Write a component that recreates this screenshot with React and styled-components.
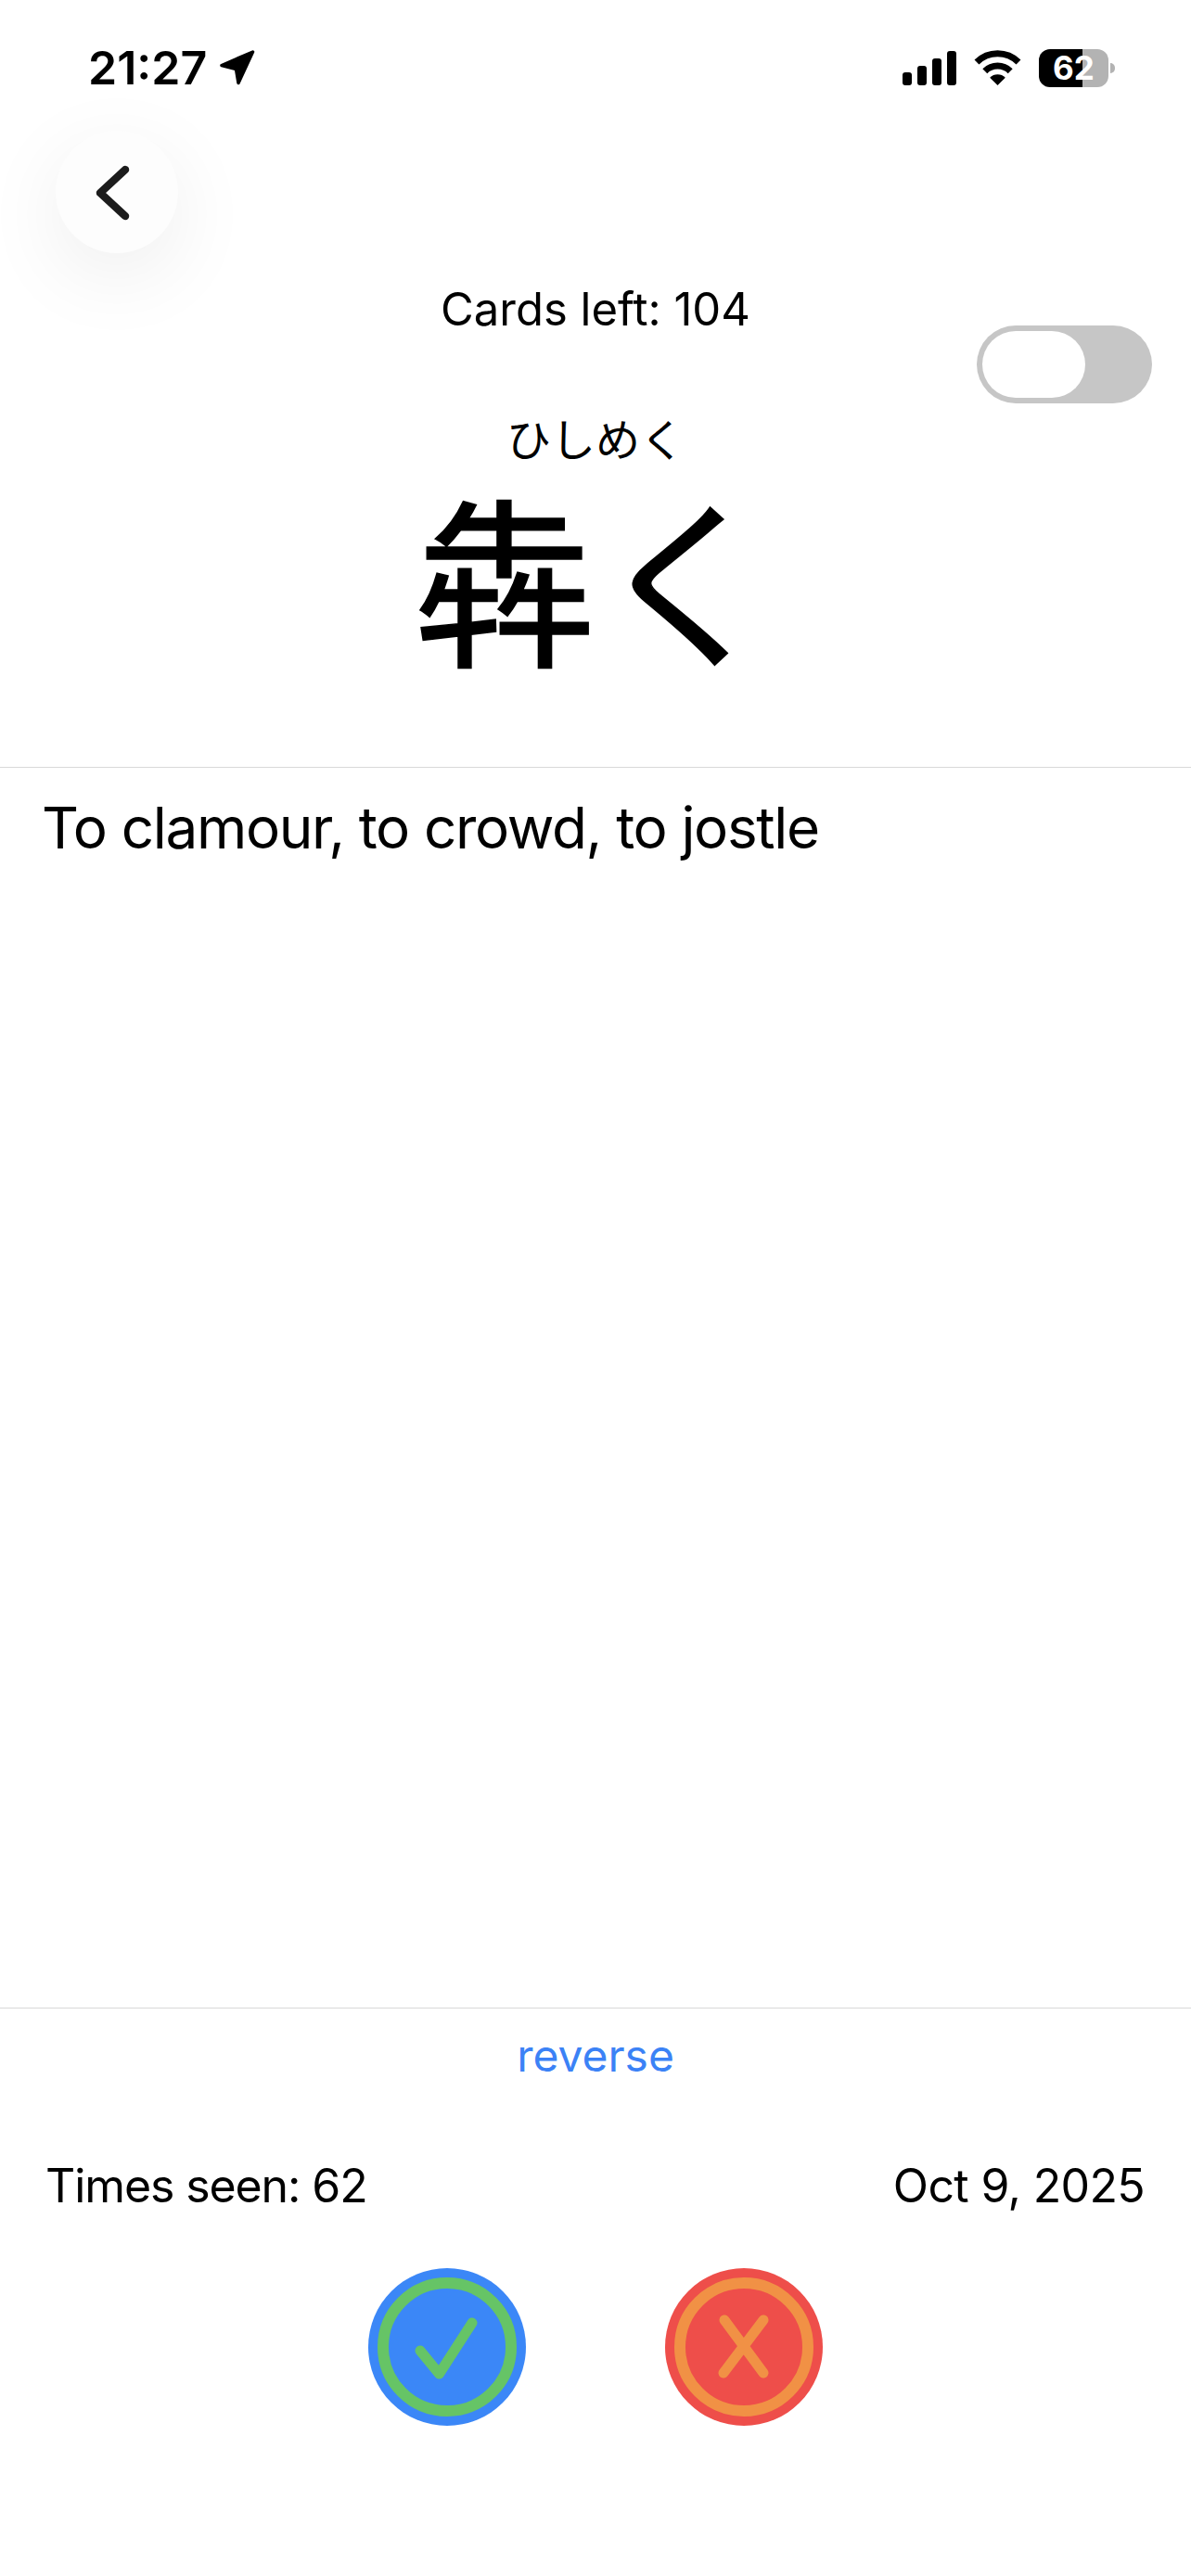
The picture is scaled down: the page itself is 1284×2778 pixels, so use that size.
import React from "react";
import styled, { createGlobalStyle } from "styled-components";

const GlobalStyle = createGlobalStyle`
  html, body {
    margin: 0;
    padding: 0;
    background: #fff;
  }
  * {
    box-sizing: border-box;
  }
`;

const CJK = `"Noto Sans CJK JP", sans-serif`;

const App = () => {
  return (
    <Page>
      <GlobalStyle />
      <StatusBar>
        <TimeGroup>
          <Time>21:27</Time>
          <svg width="40" height="40" viewBox="0 0 40 40">
            <path
              d="M36.5 3 L3 17.5 L18.5 21.5 L21 36.5 Z"
              fill="#000"
              stroke="#000"
              strokeWidth="3.5"
              strokeLinejoin="round"
            />
          </svg>
        </TimeGroup>
        <StatusIcons>
          <Signal>
            <Bar $h={14} />
            <Bar $h={21} />
            <Bar $h={29} />
            <Bar $h={37} />
          </Signal>
          <svg width="51" height="38" viewBox="0 0 51 38">
            <path d="M25.5 38 L17.2 29.7 A11.7 11.7 0 0 1 33.8 29.7 Z" fill="#000" />
            <path d="M11.8 22.7 A19.4 19.4 0 0 1 39.2 22.7" fill="none" stroke="#000" strokeWidth="7" />
            <path d="M3 13 A32 32 0 0 1 48 13" fill="none" stroke="#000" strokeWidth="7" />
          </svg>
          <Battery>62</Battery>
        </StatusIcons>
      </StatusBar>

      <BackButton>
        <svg width="132" height="132" viewBox="0 0 132 132">
          <path
            d="M75 42 L48 67 L75 92"
            fill="none"
            stroke="#1c1c1c"
            strokeWidth="8.5"
            strokeLinecap="round"
            strokeLinejoin="round"
          />
        </svg>
      </BackButton>

      <CardHead>
        <Center>
          <CardsLeft>Cards left: 104</CardsLeft>
          <Reading>ひしめく</Reading>
          <Word>犇く</Word>
        </Center>
        <Toggle>
          <Knob />
        </Toggle>
      </CardHead>

      <Body>
        <Meaning>To clamour, to crowd, to jostle</Meaning>
      </Body>

      <Footer>
        <Reverse>reverse</Reverse>
        <MetaRow>
          <MetaText $spacing={-1.1}>Times seen: 62</MetaText>
          <MetaText $spacing={-0.65}>Oct 9, 2025</MetaText>
        </MetaRow>
        <Actions>
          <RoundAction $bg="#3b87f7">
            <svg width="170" height="170" viewBox="0 0 170 170">
              <circle cx="85" cy="85" r="69" fill="none" stroke="#66c466" strokeWidth="12" />
              <path
                d="M56 89 L76.5 114 L112 59"
                fill="none"
                stroke="#66c466"
                strokeWidth="11"
                strokeLinecap="round"
                strokeLinejoin="round"
              />
            </svg>
          </RoundAction>
          <RoundAction $bg="#ee4e4a">
            <svg width="170" height="170" viewBox="0 0 170 170">
              <circle cx="85" cy="85" r="69" fill="none" stroke="#f19145" strokeWidth="12" />
              <path
                d="M64 56 L106 113 M106 56 L63 113"
                fill="none"
                stroke="#f19145"
                strokeWidth="11"
                strokeLinecap="round"
              />
            </svg>
          </RoundAction>
        </Actions>
      </Footer>
    </Page>
  );
};

export default App;

const Page = styled.div`
  width: 1284px;
  height: 2778px;
  display: flex;
  flex-direction: column;
  background: #fff;
  color: #000;
  font-family: Inter, "Liberation Sans", ${CJK};
  overflow: hidden;
`;

const StatusBar = styled.div`
  height: 94px;
  padding: 52px 89px 0 95px;
  display: flex;
  justify-content: space-between;
  align-items: center;
`;

const TimeGroup = styled.div`
  display: flex;
  align-items: center;
  gap: 13px;
`;

const Time = styled.div`
  font-size: 50px;
  font-weight: 600;
  line-height: 42px;
`;

const StatusIcons = styled.div`
  display: flex;
  align-items: center;
  gap: 19px;
`;

const Signal = styled.div`
  display: flex;
  align-items: flex-end;
  gap: 6px;
`;

const Bar = styled.div`
  width: 10px;
  height: ${(p) => p.$h}px;
  background: #000;
  border-radius: 3px;
`;

const Battery = styled.div`
  position: relative;
  width: 75px;
  height: 41px;
  border-radius: 12px;
  background: linear-gradient(to right, #000 0 47px, #b3b3b3 47px 75px);
  color: #fff;
  font-size: 35px;
  font-weight: 700;
  line-height: 41px;
  text-align: center;

  &::after {
    content: "";
    position: absolute;
    left: 77px;
    top: 15px;
    width: 5px;
    height: 11px;
    border-radius: 0 6px 6px 0;
    background: #b3b3b3;
  }
`;

const BackButton = styled.div`
  width: 132px;
  height: 132px;
  margin: 47px 0 0 60px;
  border-radius: 50%;
  background: #fdfdfd;
  box-shadow: 0 24px 90px rgba(0, 0, 0, 0.07);
  display: flex;
`;

const CardHead = styled.div`
  height: 554px;
  padding-top: 33px;
  display: grid;
  grid-template-columns: 1fr auto 1fr;
`;

const Center = styled.div`
  grid-column: 2;
  display: flex;
  flex-direction: column;
  align-items: center;
`;

const CardsLeft = styled.div`
  font-size: 49px;
  line-height: 56px;
`;

const Reading = styled.div`
  font-family: ${CJK};
  font-size: 48px;
  line-height: 56px;
  margin-top: 81px;
`;

const Word = styled.div`
  font-family: ${CJK};
  font-size: 196px;
  line-height: 196px;
  margin-top: 22px;
  -webkit-text-stroke: 1.5px #000;
`;

const Toggle = styled.div`
  grid-column: 3;
  justify-self: end;
  width: 189px;
  height: 84px;
  margin: 45px 42px 0 0;
  padding: 6px;
  border-radius: 42px;
  background: #c6c6c6;
`;

const Knob = styled.div`
  width: 111px;
  height: 72px;
  border-radius: 36px;
  background: #fff;
`;

const Body = styled.div`
  flex: 1;
  padding: 28px 45px 0;
  border-top: 1px solid #d9d9d9;
`;

const Meaning = styled.div`
  font-size: 62px;
  line-height: 74px;
  letter-spacing: -1.35px;
`;

const Footer = styled.div`
  height: 613px;
  border-top: 1px solid #d9d9d9;
  display: flex;
  flex-direction: column;
`;

const Reverse = styled.div`
  color: #3b82f6;
  font-size: 48px;
  line-height: 56px;
  text-align: center;
  margin-top: 23px;
`;

const MetaRow = styled.div`
  display: flex;
  justify-content: space-between;
  padding: 0 50px 0 49px;
  margin-top: 84px;
  font-size: 50px;
  line-height: 56px;
`;

const MetaText = styled.span`
  letter-spacing: ${(p) => p.$spacing}px;
`;

const Actions = styled.div`
  display: flex;
  justify-content: center;
  gap: 150px;
  margin-top: 61px;
`;

const RoundAction = styled.div`
  width: 170px;
  height: 170px;
  border-radius: 50%;
  background: ${(p) => p.$bg};
  display: flex;
`;
